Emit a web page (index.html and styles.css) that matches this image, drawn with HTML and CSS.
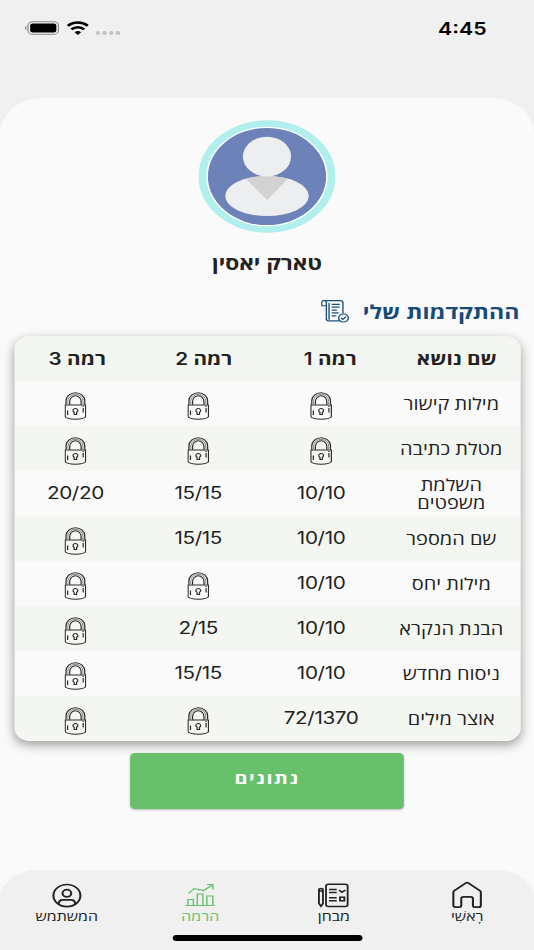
FILE: index.html
```
<!DOCTYPE html>
<html lang="he" dir="rtl">
<head>
	<meta charset="utf-8">
	<title>ההתקדמות שלי</title>
	<link rel="stylesheet" href="styles.css">
</head>
<body>
<svg class="defs" width="0" height="0">
	<symbol id="lock" viewBox="0 0 18 28">
		<g fill="none" stroke="#2c2c2c" stroke-width="1">
			<path d="M1.300 12.700V9a7.700 8.300 0 0 1 15.400 0v3.700M4.300 12.700V9.600a4.700 5.800 0 0 1 9.400 0v3.100"/>
			<path d="M2.800 12V9.300a6.200 7 0 0 1 12.400 0V12" stroke-width=".5"/>
			<path d="M.6 12.900h16.800v11.600c0 1.400-3.500 2.700-8.400 2.700S.6 25.900.6 24.500z"/>
			<path d="M8 20.300a2 2 0 1 1 2 0v2.200H8z"/>
			<path d="M2.600 18.500v4.500M15.400 16v4.500M15.400 13.900v1"/>
		</g>
	</symbol>
</svg>
<div id="screen">
	<div class="status" dir="ltr">
		<svg class="battery" width="29" height="14" viewBox="0 0 29 14">
			<path d="M1.700 5v4C.300 8.700.300 5.300 1.700 5z" fill="#777"/>
			<rect x="3" y=".7" width="25" height="12.600" rx="3.600" fill="none" stroke="#8a8a8a" stroke-width="1"/>
			<rect x="4.800" y="2.400" width="21.500" height="9.200" rx="2" fill="#000"/>
		</svg>
		<svg class="wifi" width="18" height="14" viewBox="0 0 18 14">
			<g fill="none" stroke="#000" stroke-width="2.500">
				<path d="M.8 4.800a11.700 11.700 0 0 1 16.400 0"/>
				<path d="M3.700 8.400a7.600 7.600 0 0 1 10.600 0"/>
			</g>
			<path d="M9 14L6.300 11.300a3.900 3.900 0 0 1 5.400 0z"/>
		</svg>
		<div class="dots"><i></i><i></i><i></i><i></i></div>
		<div class="clock">4:45</div>
	</div>
	<div class="sheet">
		<svg class="avatar" width="113" height="113" viewBox="0 0 113 113">
			<clipPath id="torso"><ellipse cx="56.500" cy="76" rx="34.300" ry="20"/></clipPath>
			<circle cx="56.500" cy="56.500" r="53" fill="#fff" stroke="#b0efed" stroke-width="6.500"/>
			<circle cx="56.500" cy="56.500" r="48.600" fill="#6d82b8"/>
			<ellipse cx="56.500" cy="76" rx="34.300" ry="20" fill="#edeef0"/>
			<path d="M36 55h41L56.500 80z" fill="#d2d2d2" clip-path="url(#torso)"/>
			<circle cx="56.500" cy="36.600" r="19.800" fill="#edeef0"/>
		</svg>
		<div class="name">טארק יאסין</div>
		<div class="title">
			<h1>ההתקדמות שלי</h1>
			<svg width="23" height="23" viewBox="0 0 24 24" fill="none" stroke="#1d5280" stroke-width="1.2">
				<path d="M4.500 6V2.500a2 2 0 0 0-4 0V6zM2.500.6h14c1.500 0 2.200 1 2.200 2.400V14M4.500 6v14.500"/>
				<path d="M4.500 19.500c0 1.500.5 2.300 1.800 2.300h10M6.800 3v17.500"/>
				<path d="M9 4.500h7M9 7.500h7M9 10.500h4.500M9 13.500h6M9 16.500h4"/>
				<circle cx="19.200" cy="18.800" r="4.200"/>
				<path d="M17.200 18.800l1.500 1.500 2.700-2.900"/>
			</svg>
		</div>
		<div class="table">
			<div class="row head"><div>שם נושא</div><div>רמה <b>1</b></div><div>רמה <b>2</b></div><div>רמה <b>3</b></div></div>
			<div class="row"><div>מילות קישור</div><div><svg class="lock"><use href="#lock"/></svg></div><div><svg class="lock"><use href="#lock"/></svg></div><div><svg class="lock"><use href="#lock"/></svg></div></div>
			<div class="row"><div>מטלת כתיבה</div><div><svg class="lock"><use href="#lock"/></svg></div><div><svg class="lock"><use href="#lock"/></svg></div><div><svg class="lock"><use href="#lock"/></svg></div></div>
			<div class="row"><div>השלמת<br>משפטים</div><div class="num">10/10</div><div class="num">15/15</div><div class="num">20/20</div></div>
			<div class="row"><div>שם המספר</div><div class="num">10/10</div><div class="num">15/15</div><div><svg class="lock"><use href="#lock"/></svg></div></div>
			<div class="row"><div>מילות יחס</div><div class="num">10/10</div><div><svg class="lock"><use href="#lock"/></svg></div><div><svg class="lock"><use href="#lock"/></svg></div></div>
			<div class="row"><div>הבנת הנקרא</div><div class="num">10/10</div><div class="num">2/15</div><div><svg class="lock"><use href="#lock"/></svg></div></div>
			<div class="row"><div>ניסוח מחדש</div><div class="num">10/10</div><div class="num">15/15</div><div><svg class="lock"><use href="#lock"/></svg></div></div>
			<div class="row"><div>אוצר מילים</div><div class="num">72/1370</div><div><svg class="lock"><use href="#lock"/></svg></div><div><svg class="lock"><use href="#lock"/></svg></div></div>
		</div>
		<div class="button">נתונים</div>
		<div class="nav">
			<div class="tabs">
				<div class="tab">
					<svg width="26" height="28" viewBox="0 0 26 28" fill="none" stroke="#222" stroke-width="1.700" stroke-linejoin="round">
						<path d="M1.700 11.500c0-1 .4-1.700 1.200-2.200l8.900-7.200c.8-.6 1.600-.6 2.400 0l8.900 7.200c.8.5 1.200 1.200 1.200 2.200v12.700c0 1.500-.7 2-1.700 2h-3.400c-1 0-1.400-.6-1.400-1.600v-6.700c0-1.300-.6-2-1.800-2h-6c-1.200 0-1.800.7-1.800 2v6.700c0 1-.4 1.600-1.400 1.600H3.400c-1 0-1.700-.5-1.700-2z"/>
					</svg>
					<span>רָאשִׁי</span>
				</div>
				<div class="tab">
					<svg width="26" height="28" viewBox="0 0 26 28" fill="none" stroke="#222" stroke-width="1.500">
						<rect x="7" y="3.300" width="17.800" height="22.200" rx="2"/>
						<path d="M1.200 10h3.300v12.500l-1.600 2.700-1.700-2.700zM1.200 10V8.700c0-1.500 3.300-1.500 3.300 0V10"/>
						<path d="M9.500 8.500h6.300M9.500 11.500h6.300M9.500 16.800h6.300M9.500 19.800h6.300M17.800 9l2.300 2.300L23 9"/>
						<rect x="18.500" y="16.200" width="3.600" height="3.600"/>
					</svg>
					<span>מבחן</span>
				</div>
				<div class="tab active">
					<svg width="26" height="28" viewBox="0 0 26 28" fill="none" stroke="#68c06c" stroke-width="1.200">
						<path d="M.5 24.500h24M2.500 24.500v-6H7v6M10.200 24.500V13h4.600v11.500M18 24.500V15h5v9.500"/>
						<path d="M3 12.300l4.500-4.700 8 1.900 7-5.500M18.200 3.500h4.800v4.800"/>
					</svg>
					<span>הרמה</span>
				</div>
				<div class="tab">
					<svg width="26" height="28" viewBox="0 0 26 28" fill="none" stroke="#222" stroke-width="1.700">
						<circle cx="13" cy="14.600" r="11.100"/>
						<circle cx="13" cy="12.300" r="3.600"/>
						<path d="M6.200 23.300c0-3 1-4.400 3.500-4.400h6.600c2.500 0 3.500 1.400 3.500 4.400"/>
					</svg>
					<span>המשתמש</span>
				</div>
			</div>
			<div class="home_bar"></div>
		</div>
	</div>
</div>
</body>
</html>
```
FILE: styles.css
```
body {
	margin: 0;
	background: #f0f0f0;
	font-family: "Open Sans", "Liberation Sans", sans-serif;
	color: #222;
	overflow: hidden;
}
.defs {
	display: block;
}
#screen {
	width: 439px;
	height: 950px;
	transform: scaleX(1.2164);
	transform-origin: right top;
}
.status {
	box-sizing: border-box;
	height: 98px;
	padding: 21px 39px 0 20px;
	display: flex;
	align-items: flex-start;
}
.wifi {
	margin-left: 6px;
	margin-top: -0.5px;
}
.dots {
	display: flex;
	gap: 2px;
	margin: 10px 0 0 6px;
}
.dots i {
	width: 3.4px;
	height: 4px;
	border-radius: 2px;
	background: #c2c2c2;
}
.clock {
	margin-left: auto;
	margin-top: -3.5px;
	font: 600 17.5px/22px Inter, sans-serif;
	color: #000;
}
.sheet {
	box-sizing: border-box;
	height: 852px;
	padding-top: 22px;
	background: #fafafa;
	border-radius: 35px 35px 0 0;
	display: flex;
	flex-direction: column;
	align-items: center;
}
.name {
	margin-top: 18px;
	font-size: 18.6px;
	line-height: 24px;
	font-weight: bold;
}
.title {
	align-self: stretch;
	height: 30px;
	margin: 22px 12px 0;
	display: flex;
	align-items: flex-start;
	gap: 11px;
}
.title h1 {
	margin: 0;
	font-size: 19px;
	line-height: 30px;
	color: #164a78;
}
.title svg {
	margin-top: 3px;
}
.table {
	width: 416px;
	margin-top: 9px;
	border-radius: 13px;
	background: #fafafa;
	box-shadow: 0 4px 10px rgba(0, 0, 0, 0.38);
	overflow: hidden;
}
.row {
	height: 45px;
	display: grid;
	grid-template-columns: 113px 101px 101px 101px;
	align-items: center;
	text-align: center;
	font-size: 16.4px;
	line-height: 18px;
}
.row:nth-child(odd) {
	background: #f4f6f1;
}
.head {
	grid-template-columns: repeat(4, 104px);
	font-size: 17px;
	font-weight: bold;
}
.head b {
	font: 600 17px/18px Inter, sans-serif;
}
.num {
	font-family: Inter, sans-serif;
	font-size: 17px;
	letter-spacing: -0.3px;
	padding-bottom: 1px;
	direction: ltr;
}
.lock {
	display: block;
	width: 18px;
	height: 28px;
	margin: 5px auto 0;
}
.button {
	width: 225px;
	height: 56px;
	margin-top: 11.5px;
	border-radius: 4px;
	background: #68c06c;
	box-shadow: 0 1px 2px rgba(0, 0, 0, 0.25);
	color: #fff;
	font-size: 16.3px;
	line-height: 51px;
	font-weight: bold;
	letter-spacing: 1.3px;
	text-align: center;
}
.nav {
	width: 439px;
	height: 79px;
	margin-top: auto;
	background: #f0f0f0;
	border-radius: 30px 30px 0 0;
	box-shadow: 0 0 2px rgba(0, 0, 0, 0.1);
}
.tabs {
	display: flex;
	height: 64px;
	padding-top: 10px;
	box-sizing: border-box;
}
.tab {
	flex: 1;
	display: flex;
	flex-direction: column;
	align-items: center;
	font-size: 13.1px;
	line-height: 15px;
}
.active {
	color: #68c06c;
}
.home_bar {
	width: 156px;
	height: 5.500px;
	margin: 0 auto;
	border-radius: 3px;
	background: #000;
}
```
